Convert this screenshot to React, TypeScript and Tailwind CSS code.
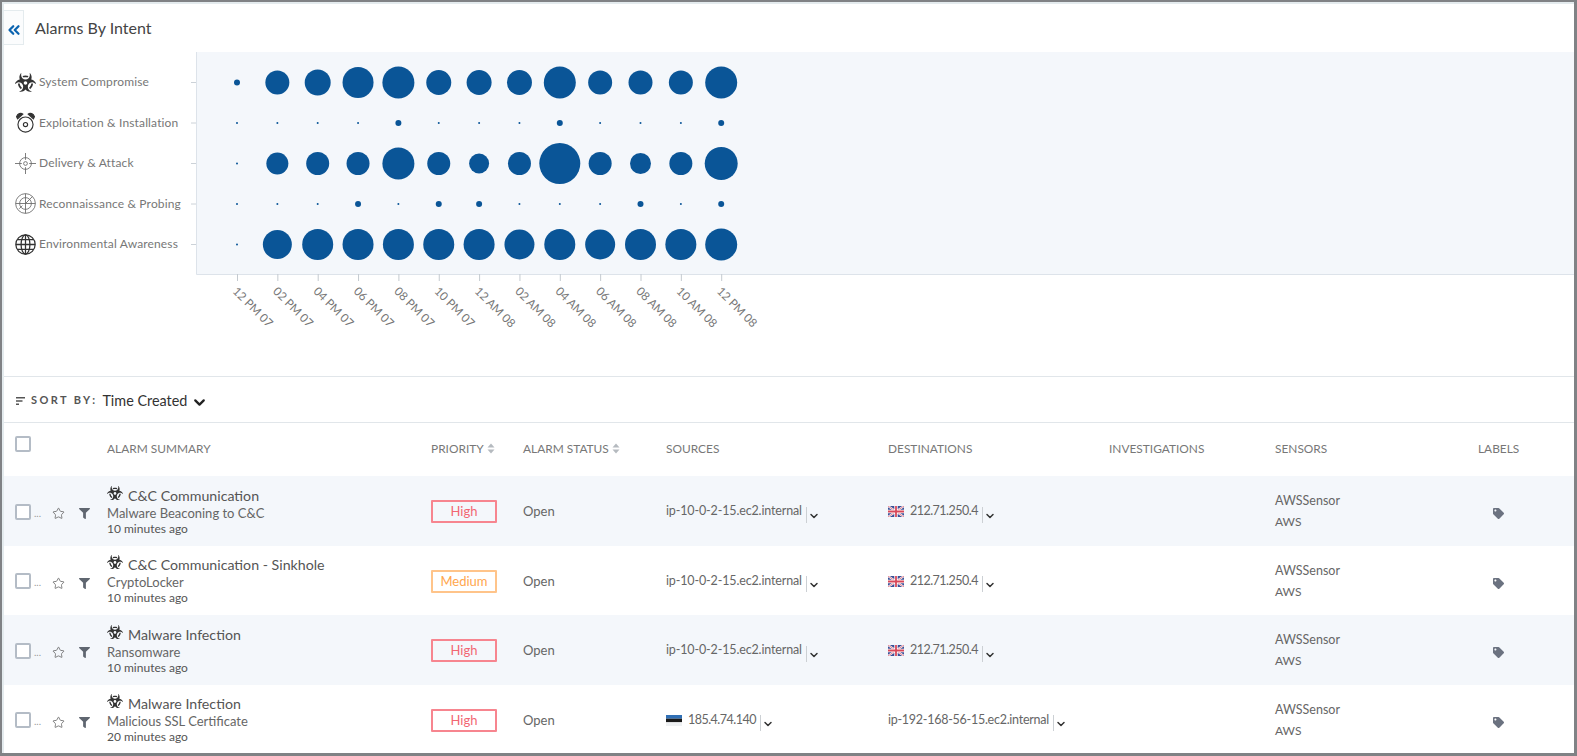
import { ChevronDown, ChevronsLeft, Star } from 'lucide-react';
import { FaBiohazard, FaFilter, FaTag } from 'react-icons/fa';

const hours = [
  '12 PM 07', '02 PM 07', '04 PM 07', '06 PM 07', '08 PM 07', '10 PM 07',
  '12 AM 08', '02 AM 08', '04 AM 08', '06 AM 08', '08 AM 08', '10 AM 08', '12 PM 08',
];

// bubble diameters per intent, one for each hour
const bubbles = [
  [6, 24, 26, 31, 32, 25, 25, 25, 32, 24, 24, 24, 32],
  [2, 2, 2, 2, 6, 2, 2, 2, 6, 2, 2, 2, 6],
  [2, 22, 23, 23, 32, 23, 20, 23, 41, 23, 21, 23, 33],
  [2, 2, 2, 6, 2, 6, 6, 2, 2, 2, 6, 2, 6],
  [2, 29, 31, 31, 31, 31, 31, 30, 31, 30, 31, 31, 32],
];

function ClockIcon() {
  return (
    <svg viewBox="0 0 20 20" className="h-[21px] w-[21px]" fill="none" stroke="#333" strokeWidth="1.1">
      <circle cx="10" cy="12" r="7.2" />
      <circle cx="10" cy="12" r="2" />
      <path d="M1.5 4.5 C2.5 1.5 5.5 0.5 7.5 2 L2.5 6.5 Z" fill="#333" />
      <path d="M18.5 4.5 C17.5 1.5 14.5 0.5 12.5 2 L17.5 6.5 Z" fill="#333" />
    </svg>
  );
}

function TargetIcon() {
  return (
    <svg viewBox="0 0 20 20" className="h-[21px] w-[21px]" fill="none" stroke="#666" strokeWidth="0.8">
      <circle cx="10" cy="10" r="5.6" />
      <circle cx="10" cy="10" r="1.8" />
      <path d="M0 10H6.5M13.5 10H20M10 0V6.5M10 13.5V20" />
    </svg>
  );
}

function RadarIcon() {
  return (
    <svg viewBox="0 0 20 20" className="h-[21px] w-[21px]" fill="none" stroke="#666" strokeWidth="0.8">
      <circle cx="10" cy="10" r="9.4" />
      <circle cx="10" cy="10" r="5.6" />
      <path d="M0.6 10H19.4M10 0.6V19.4M10 10L16.6 3.4M4 15L7 12" />
    </svg>
  );
}

function GlobeIcon() {
  return (
    <svg viewBox="0 0 20 20" className="h-[21px] w-[21px]" fill="none" stroke="#333" strokeWidth="1.2">
      <circle cx="10" cy="10" r="9.2" />
      <ellipse cx="10" cy="10" rx="4.2" ry="9.2" />
      <path d="M10 0.8V19.2M0.8 10H19.2M2.2 5.4H17.8M2.2 14.6H17.8" />
    </svg>
  );
}

const intents = [
  { name: 'System Compromise', icon: <FaBiohazard className="h-[21px] w-[21px] text-[#333]" /> },
  { name: 'Exploitation & Installation', icon: <ClockIcon /> },
  { name: 'Delivery & Attack', icon: <TargetIcon /> },
  { name: 'Reconnaissance & Probing', icon: <RadarIcon /> },
  { name: 'Environmental Awareness', icon: <GlobeIcon /> },
];

function BubbleChart() {
  const rowY = (i: number) => 30.5 + i * 40.5;
  const colX = (i: number) => 41 + i * 40.35;
  return (
    <svg width="1378" height="325" className="block shrink-0 overflow-visible">
      <rect x="0" y="0" width="1378" height="222" fill="#f4f7fb" />
      <path d="M0.5 0V222.5H1378" fill="none" stroke="#dde3ea" />
      {bubbles.map((_, r) => (
        <path key={r} d={`M-5 ${rowY(r)}H0`} stroke="#ccd2d8" />
      ))}
      {hours.map((h, c) => (
        <g key={h}>
          <path d={`M${colX(c) + 0.5} 222V229`} stroke="#c4cad0" />
          <text
            x={colX(c) - 5}
            y={240}
            fontSize="11.7"
            fill="#777"
            transform={`rotate(45 ${colX(c) - 5} ${240})`}
          >
            {h}
          </text>
        </g>
      ))}
      {bubbles.map((row, r) =>
        row.map((d, c) => (
          <circle key={`${r}-${c}`} cx={colX(c)} cy={rowY(r)} r={d / 2} fill="#0a5597" />
        ))
      )}
    </svg>
  );
}

function UkFlag() {
  return (
    <svg viewBox="0 0 16 11" className="h-[11px] w-4 shrink-0">
      <rect width="16" height="11" fill="#3b4f96" />
      <path d="M0 0L16 11M16 0L0 11" stroke="#fff" strokeWidth="2" />
      <path d="M0 0L16 11M16 0L0 11" stroke="#d8485a" strokeWidth="0.7" />
      <path d="M8 0V11M0 5.5H16" stroke="#fff" strokeWidth="3.4" />
      <path d="M8 0V11M0 5.5H16" stroke="#d8485a" strokeWidth="1.8" />
    </svg>
  );
}

function EstoniaFlag() {
  return (
    <svg viewBox="0 0 16 11" className="h-[11px] w-4 shrink-0">
      <rect width="16" height="3.7" fill="#2f6fb5" />
      <rect y="3.7" width="16" height="3.6" fill="#1a1a1a" />
      <rect y="7.3" width="16" height="3.7" fill="#eef0f2" />
    </svg>
  );
}

function Checkbox() {
  return <span className="block h-4 w-4 shrink-0 rounded-[2px] border-2 border-[#b4bcc6] bg-white" />;
}

function SortArrows() {
  return (
    <svg viewBox="0 0 8 11" className="ml-[3px] h-[11px] w-2">
      <path d="M4 0.5L7.5 4.5H0.5Z M4 10.5L0.5 6.5H7.5Z" fill="#b5babf" />
    </svg>
  );
}

function Address({ text, flag }: { text: string; flag?: 'uk' | 'ee' }) {
  const isHost = text.startsWith('ip-192');
  return (
    <div className="flex items-center text-[12.5px] text-[#666]">
      {flag === 'uk' && <UkFlag />}
      {flag === 'ee' && <EstoniaFlag />}
      <span className={flag ? 'ml-[6px] tracking-[-0.52px]' : isHost ? 'tracking-[-0.26px]' : 'tracking-[-0.14px]'}>{text}</span>
      <span className="ml-1 h-4 w-px translate-y-[3px] bg-[#ccd0d4]" />
      <ChevronDown className="ml-px h-3 w-3 translate-y-[4px] text-[#333]" strokeWidth={3} />
    </div>
  );
}

const alarms = [
  {
    title: 'C&C Communication', sub: 'Malware Beaconing to C&C', time: '10 minutes ago', priority: 'High',
    source: { text: 'ip-10-0-2-15.ec2.internal' }, dest: { text: '212.71.250.4', flag: 'uk' as const },
  },
  {
    title: 'C&C Communication - Sinkhole', sub: 'CryptoLocker', time: '10 minutes ago', priority: 'Medium',
    source: { text: 'ip-10-0-2-15.ec2.internal' }, dest: { text: '212.71.250.4', flag: 'uk' as const },
  },
  {
    title: 'Malware Infection', sub: 'Ransomware', time: '10 minutes ago', priority: 'High',
    source: { text: 'ip-10-0-2-15.ec2.internal' }, dest: { text: '212.71.250.4', flag: 'uk' as const },
  },
  {
    title: 'Malware Infection', sub: 'Malicious SSL Certificate', time: '20 minutes ago', priority: 'High',
    source: { text: '185.4.74.140', flag: 'ee' as const }, dest: { text: 'ip-192-168-56-15.ec2.internal' },
  },
];

const gridCols = 'grid grid-cols-[103px_324px_92px_143px_222px_221px_166px_203px_96px] items-center';

export default function App() {
  return (
    <div className="h-[756px] w-[1577px] overflow-hidden bg-[#808285] pb-[3px] pl-[2px] pr-[3px] pt-[2px] font-[Lato,sans-serif]">
      <div className="h-full overflow-hidden border-l-2 border-t-2 border-[#e4ebee] bg-white">
        {/* Title */}
        <div className="flex h-[48px] items-start">
          <button className="mt-[6px] flex h-[35px] w-[20px] items-center justify-center border border-l-0 border-[#e4ebee] bg-[#fbfcfd] pt-1">
            <ChevronsLeft className="h-[18px] w-[18px] text-[#0a63b0]" strokeWidth={3} />
          </button>
          <h1 className="ml-[11px] mt-[14px] text-[16px] leading-5 text-[#444]">Alarms By Intent</h1>
        </div>

        {/* Bubble chart */}
        <div className="flex h-[325px] border-b border-[#e1e6ea]">
          <div className="w-[192px] shrink-0 pl-[11px] pt-[10px]">
            {intents.map((intent) => (
              <div key={intent.name} className="flex h-[40.5px] items-center gap-[3px]">
                {intent.icon}
                <span className="whitespace-nowrap text-[12px] tracking-[0.15px] text-[#777]">{intent.name}</span>
              </div>
            ))}
          </div>
          <BubbleChart />
        </div>

        {/* Sort bar */}
        <div className="flex h-[46px] items-center border-b border-[#e1e6ea] pl-3 pt-[2px]">
          <svg viewBox="0 0 9 8" className="h-2 w-[9px]">
            <path d="M0 0.75H9M0 4H6.5M0 7.25H3" stroke="#555" strokeWidth="1.5" />
          </svg>
          <span className="ml-[6px] text-[11px] font-bold tracking-[2.4px] text-[#555]">SORT BY:</span>
          <span className="ml-[5px] text-[14.4px] text-[#333]">Time Created</span>
          <ChevronDown className="ml-[4px] mt-[3px] h-[17px] w-[17px] text-[#222]" strokeWidth={3.2} />
        </div>

        {/* Table header */}
        <div className={`${gridCols} h-[53px] pb-[2px] text-[11.9px] text-[#777]`}>
          <div className="-mt-[10px] pl-[11px]">
            <Checkbox />
          </div>
          <span>ALARM SUMMARY</span>
          <span className="flex items-center">PRIORITY<SortArrows /></span>
          <span className="flex items-center">ALARM STATUS<SortArrows /></span>
          <span>SOURCES</span>
          <span>DESTINATIONS</span>
          <span>INVESTIGATIONS</span>
          <span>SENSORS</span>
          <span>LABELS</span>
        </div>

        {/* Alarm rows */}
        {alarms.map((alarm, i) => (
          <div key={i} className={`${gridCols} h-[69.5px] pt-[2px] ${i % 2 === 0 ? 'bg-[#f4f7fb]' : 'bg-white'}`}>
            <div className="flex items-center pl-[11px]">
              <Checkbox />
              <span className="ml-[3px] mt-[2px] w-[10px] text-[10px] leading-none text-[#999]">...</span>
              <Star className="ml-[8px] h-[13px] w-[13px] translate-y-[2px] text-[#666]" strokeWidth={1.5} />
              <FaFilter className="ml-[14px] h-[11px] w-[11px] translate-y-[2px] text-[#5f6670]" />
            </div>
            <div className="flex flex-col">
              <div className="flex items-center">
                <FaBiohazard className="-mt-[6px] h-4 w-4 text-[#333]" />
                <span className="ml-[5px] text-[14.2px] leading-[18px] text-[#555]">{alarm.title}</span>
              </div>
              <span className="text-[13px] leading-[16px] text-[#666]">{alarm.sub}</span>
              <span className="text-[12px] leading-[16px] text-[#555]">{alarm.time}</span>
            </div>
            <div>
              {alarm.priority === 'High' ? (
                <span className="flex h-[23px] w-[66px] items-center justify-center rounded-[1px] border-2 border-[#f7858f] text-[13px] text-[#f26672]">
                  High
                </span>
              ) : (
                <span className="flex h-[23px] w-[66px] items-center justify-center rounded-[1px] border-2 border-[#ffc48a] text-[13px] text-[#ffa64d]">
                  Medium
                </span>
              )}
            </div>
            <span className="text-[13px] text-[#666]">Open</span>
            <Address {...alarm.source} />
            <Address {...alarm.dest} />
            <span />
            <div className="flex flex-col gap-[5px] text-[12.5px] leading-4 text-[#666]">
              <span>AWSSensor</span>
              <span className="text-[12px]">AWS</span>
            </div>
            <div className="pl-[15px]">
              <FaTag className="h-[11px] w-[11px] translate-y-[2px] text-[#6b7280]" />
            </div>
          </div>
        ))}
      </div>
    </div>
  );
}
